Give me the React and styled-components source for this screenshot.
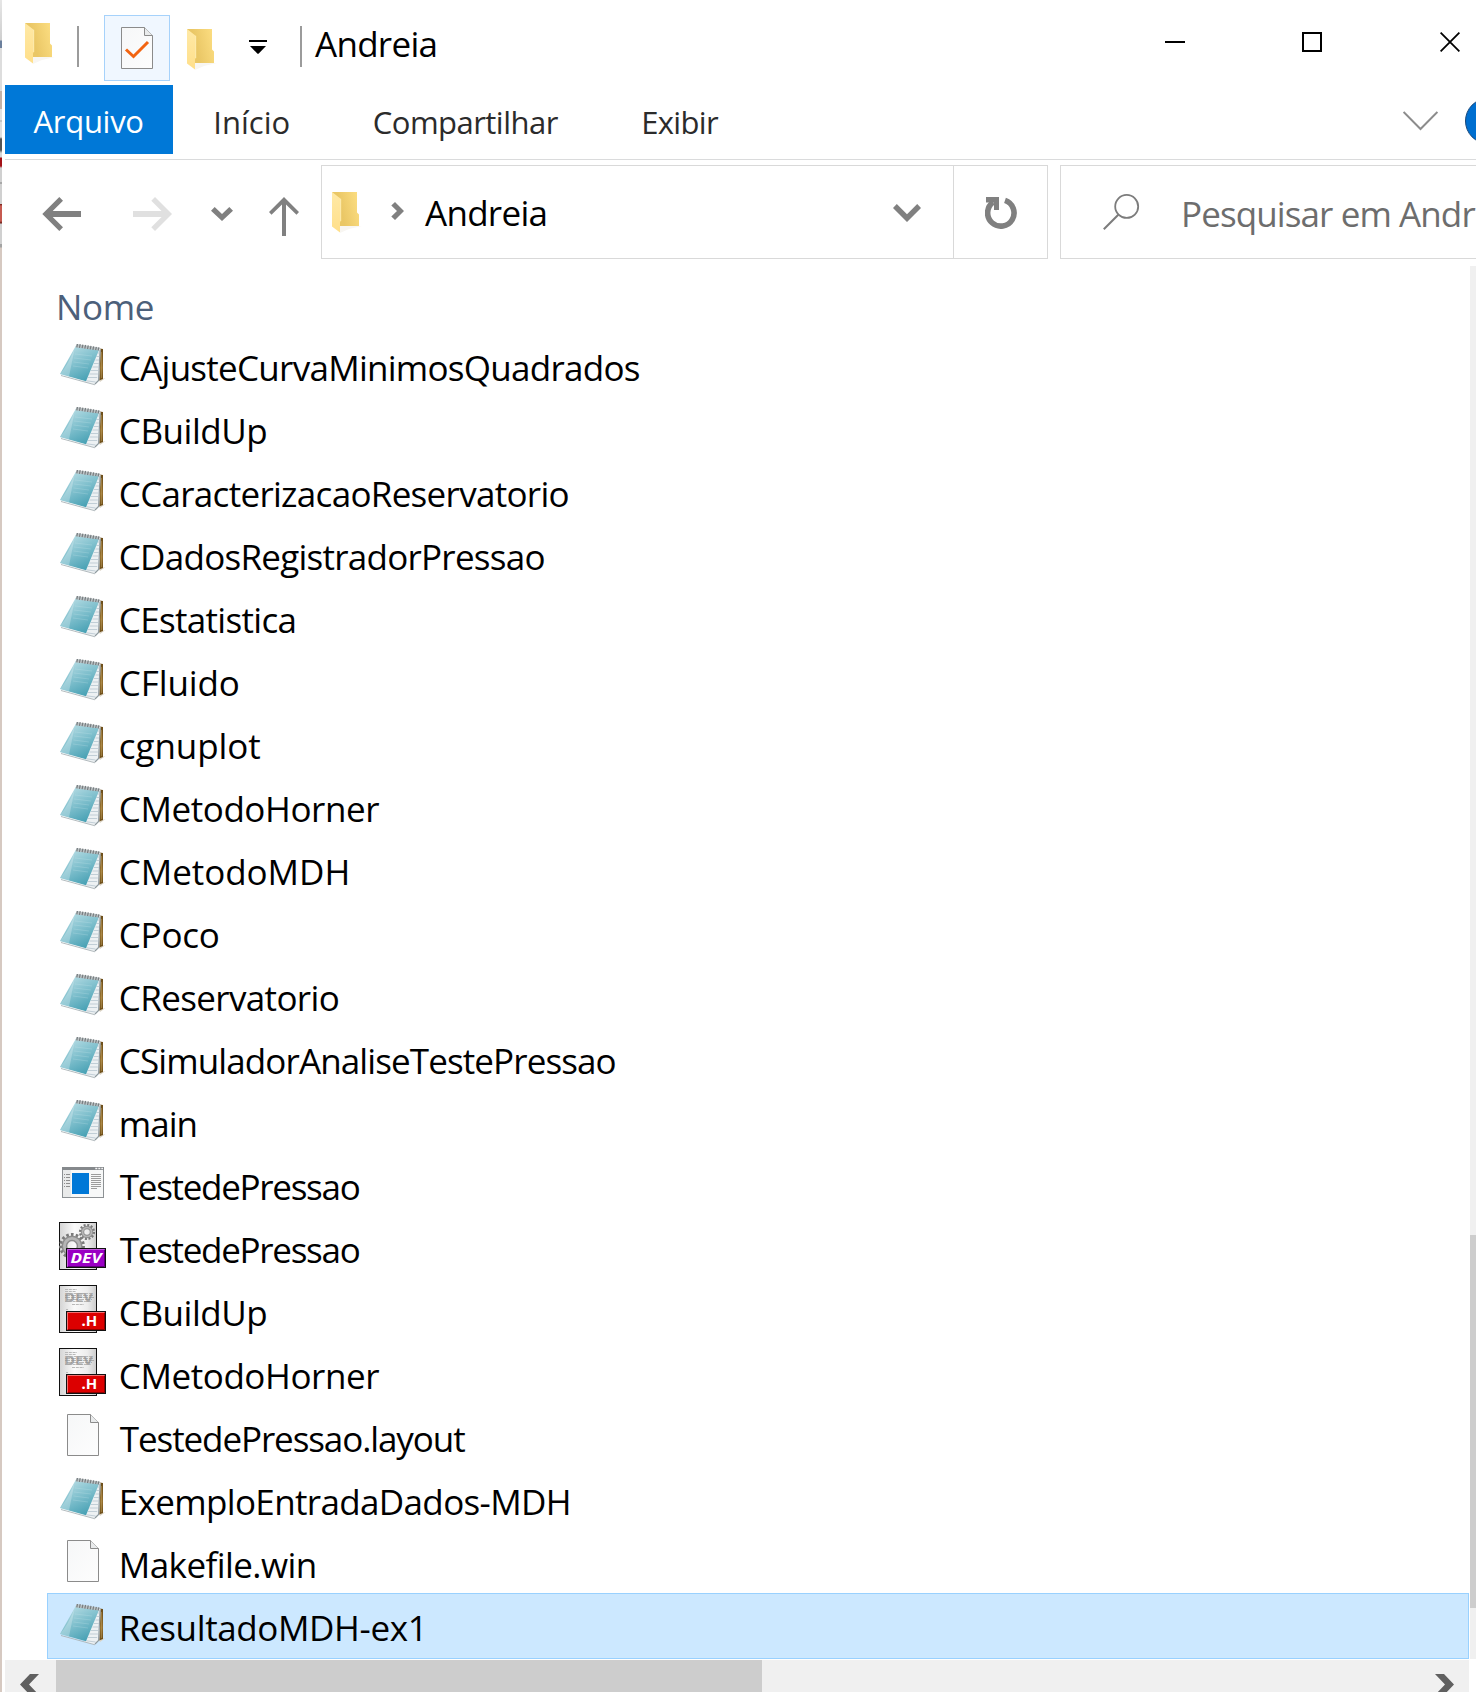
import React from "react";
import styled, { createGlobalStyle } from "styled-components";

const GlobalStyle = createGlobalStyle`
  *, *::before, *::after { box-sizing: border-box; }
  body {
    margin: 0;
    background: #fff;
    color: #000;
    font-family: "Open Sans", "Noto Sans", "Liberation Sans", sans-serif;
  }
  svg { display: block; flex: none; }
`;

const Screen = styled.div`
  display: flex;
  width: 1476px;
  height: 1692px;
  overflow: hidden;
`;

/* Sliver of the window that lies behind this one */
const BackdropEdge = styled.div`
  flex: none;
  width: 2px;
  background: linear-gradient(
    #e6e6e6 0, #cfcfcf 40px,
    #6b7f9c 41px, #6b7f9c 48px,
    #dddddd 48px, #dddddd 91px,
    #c3b2a8 91px, #c3b2a8 109px,
    #e2e2e2 109px, #e2e2e2 120px,
    #c4c4c4 120px, #c4c4c4 122px,
    #dedede 122px, #dedede 137px,
    #555555 139px, #555555 150px,
    #d6d6d6 153px, #d6d6d6 157px,
    #a31218 158px, #a31218 166px,
    #d0d0d0 168px, #d0d0d0 182px,
    #a8a8a8 182px, #a8a8a8 184px,
    #d0d0d0 184px, #d0d0d0 204px,
    #6a1a14 204px, #c65a50 206px, #c65a50 221px, #6a1a14 223px,
    #d0d0d0 224px, #d0d0d0 244px,
    #a3a3a3 244px, #a3a3a3 247px,
    #d6c9c1 248px, #d6c9c1 100%
  );
`;

const Window = styled.main`
  flex: none;
  display: flex;
  flex-direction: column;
  width: 1474px;
  padding-left: 3px;
  background: #fff;
`;

const TitleBar = styled.header`
  flex: none;
  display: flex;
  align-items: flex-start;
  height: 85px;
`;

const IconHolder = styled.span`
  flex: none;
  display: block;
  margin: ${(p) => p.$margin};
`;

const Separator = styled.span`
  flex: none;
  width: 2px;
  height: 41px;
  margin: 26px 0 0 ${(p) => p.$left}px;
  background: #9b9b9b;
`;

const QuickButton = styled.button`
  flex: none;
  display: flex;
  align-items: flex-start;
  justify-content: center;
  width: 66px;
  height: 66px;
  margin: 15px 0 0 25px;
  padding: 11px 0 0;
  border: 1px solid #a6d2fb;
  background: #f0f7ff;
`;

const Label = styled.span`
  font-size: ${(p) => p.$size || 35}px;
  letter-spacing: ${(p) => p.$tracking || 0}px;
  white-space: nowrap;
`;

const WindowTitle = styled(Label)`
  margin-left: 13px;
  line-height: 87px;
`;

const CaptionButtons = styled.div`
  display: flex;
  gap: 117px;
  margin: 32px 16px 0 auto;

  & > :last-child { margin-left: 1px; }
`;

const Ribbon = styled.nav`
  flex: none;
  display: flex;
  height: 75px;
  border-bottom: 1px solid #dadbdc;
`;

const Tab = styled.a`
  flex: none;
  height: 69px;
  padding-left: ${(p) => p.$inset}px;
  width: ${(p) => p.$width}px;
  line-height: ${(p) => (p.$active ? 72 : 74)}px;
  color: ${(p) => (p.$active ? "#fff" : "#2b2b2b")};
  background: ${(p) => (p.$active ? "#0078d7" : "transparent")};
`;

const RibbonTools = styled.div`
  display: flex;
  flex: none;
  width: 73px;
  margin-left: auto;
  overflow: hidden;
`;

const HelpBadge = styled.span`
  flex: none;
  width: 46px;
  height: 46px;
  margin: 13px 0 0 27px;
  border: 1px solid #17477a;
  border-radius: 50%;
  background: #006fd0;
`;

const AddressRow = styled.div`
  flex: none;
  display: flex;
  height: 106px;
  padding-top: 5px;
`;

const NavButtons = styled.div`
  flex: none;
  display: flex;
  width: 316px;
  padding: 32px 0 0 37px;
`;

const AddressBox = styled.div`
  flex: none;
  display: flex;
  width: 633px;
  height: 94px;
  border: 1px solid #d9d9d9;
`;

const Crumb = styled(Label)`
  flex: 1;
  margin-left: 21px;
  line-height: 94px;
`;

const RefreshButton = styled.button`
  flex: none;
  display: flex;
  align-items: flex-start;
  width: 95px;
  height: 94px;
  margin-left: -1px;
  padding: 31px 0 0 31px;
  border: 1px solid #d9d9d9;
  background: #fff;
`;

const SearchBox = styled.div`
  flex: none;
  display: flex;
  width: 440px;
  height: 94px;
  margin-left: 12px;
  border: 1px solid #d9d9d9;
  color: #6d6d6d;
`;

const SearchHint = styled(Label)`
  margin-left: 41px;
  line-height: 96px;
`;

const Content = styled.div`
  flex: none;
  display: flex;
  justify-content: space-between;
  width: 1471px;
  height: 1393px;
`;

const ListPane = styled.section`
  width: 1464px;
  padding-left: 42px;
`;

const ColumnHeader = styled.div`
  height: 67px;
  padding-left: 9px;
  line-height: 81px;
  color: #4c607a;
`;

const FileList = styled.ul`
  margin: 0;
  padding: 0;
  list-style: none;
`;

const FileRow = styled.li`
  display: flex;
  height: 66px;
  margin-bottom: -3px;
  padding: 6px 0 0 11px;
  border: 1px solid ${(p) => (p.$selected ? "#99d1ff" : "transparent")};
  background: ${(p) => (p.$selected ? "#cce8ff" : "transparent")};
`;

const FileName = styled(Label)`
  margin: -4px 0 0 ${(p) => 11.8 + (p.$indent || 0)}px;
  line-height: 64px;
`;

const VerticalTrack = styled.div`
  width: 6px;
  background: #f0f0f0;
`;

const VerticalThumb = styled.div`
  height: 373px;
  margin-top: 969px;
  background: #cdcdcd;
`;

const HorizontalTrack = styled.div`
  flex: none;
  display: flex;
  width: 1464px;
  height: 32px;
  margin-top: 1px;
  padding: 14px 15px 0 15px;
  background: linear-gradient(90deg, #f0f0f0 51px, #cdcdcd 51px, #cdcdcd 757px, #f0f0f0 757px);
  justify-content: space-between;
`;

const FolderIcon = () => (
  <svg width="30" height="42" viewBox="0 0 30 42">
    <defs>
      <linearGradient id="folderBack" x1="0" x2="1" y1="0.3" y2="0">
        <stop offset="0.25" stopColor="#eac766" />
        <stop offset="1" stopColor="#fddf83" />
      </linearGradient>
      <linearGradient id="folderFlap" x1="0" x2="0" y1="0" y2="1">
        <stop offset="0" stopColor="#ffe9a6" />
        <stop offset="1" stopColor="#ffdf8a" />
      </linearGradient>
    </defs>
    <path d="M8 34 L30 34 L17 37 L8 41 Z" fill="#f8f6f2" />
    <path d="M0 0 H25 V20.5 L27 22.5 V34 H8 Z" fill="url(#folderBack)" />
    <path d="M0 0 L8.7 6.8 V29 L8 30.5 V40.5 L0 34.5 Z" fill="url(#folderFlap)" />
    <path d="M8.7 6.8 V29" stroke="#fff0bd" strokeWidth="0.8" />
  </svg>
);

const Page = ({ children }) => (
  <>
    <path d="M0.5 0.5 H23.5 L31.5 8.5 V41.5 H0.5 Z" fill="url(#pageFill)" stroke="#8b8b8b" />
    <path d="M23.5 0.5 V8.5 H31.5" fill="#e9ebec" stroke="#8b8b8b" />
    {children}
  </>
);

const PageGradient = () => (
  <defs>
    <linearGradient id="pageFill" x1="0" x2="1" y1="0" y2="1">
      <stop offset="0" stopColor="#f6f7f8" />
      <stop offset="1" stopColor="#fdfdfd" />
    </linearGradient>
  </defs>
);

const CheckedPageIcon = () => (
  <svg width="32" height="42" viewBox="0 0 32 42">
    <PageGradient />
    <Page>
      <path d="M5 22.5 L12.5 29.5 L27 15" fill="none" stroke="#f26411" strokeWidth="3" />
    </Page>
  </svg>
);

const BlankPageIcon = () => (
  <svg width="48" height="48" viewBox="0 0 48 48">
    <PageGradient />
    <g transform="translate(8 3)">
      <Page />
    </g>
  </svg>
);

const NotepadIcon = () => (
  <svg width="48" height="48" viewBox="0 0 48 48">
    <defs>
      <linearGradient id="padCover" x1="0.2" x2="0.75" y1="0" y2="1">
        <stop offset="0" stopColor="#bcdfe6" />
        <stop offset="0.45" stopColor="#84c2cf" />
        <stop offset="1" stopColor="#419db1" />
      </linearGradient>
      <linearGradient id="padBack" x1="0" x2="0" y1="0" y2="1">
        <stop offset="0" stopColor="#6b4c18" />
        <stop offset="0.6" stopColor="#95702f" />
        <stop offset="1" stopColor="#6b4c18" />
      </linearGradient>
    </defs>
    <path d="M40 40 L46.5 38 L41 42 Z" fill="#d9d2c4" />
    <path d="M40.5 8.5 L44 9 L44 39 L40 40.5 Z" fill="url(#padBack)" />
    <path d="M42.4 12 V38" stroke="#c8a868" strokeWidth="0.5" />
    <path d="M38 9 L41.6 8.8 L40.3 40.5 L35.5 44.5 L25 42 Z" fill="#edf1f3" />
    <path d="M41.1 10 L39.6 40.5 L36 44" fill="none" stroke="#8f9a9f" strokeWidth="1.2" />
    <path
      d="M38.5 13 H40.5 M37.3 16.5 H40.2 M36.5 20 H40 M35 23.5 H39.8 M33.5 27 H39.6 M32 30.5 H39.2 M30.5 34 H38.8 M29 37.5 H38.2 M27.5 40.8 L36.5 42"
      stroke="#bccad2"
      strokeWidth="0.9"
    />
    <path d="M2 35.5 L36 44.8" stroke="#aab3b7" strokeWidth="0.9" />
    <path d="M17 5.5 L40.2 9.5 L27 41.3 L1 34 Z" fill="url(#padCover)" />
    <path d="M17 5.5 L15.5 9 Q9 25 1 34 L10 36.5 Q13 22 15.5 9 Z" fill="#e8f5f7" opacity="0.3" />
    <path
      d="M16 14 L33 16 M15 18 L32 20 M14.5 22 L30 24 M14 26 L29 28"
      stroke="#d6eef2"
      strokeWidth="0.7"
      opacity="0.3"
    />
    <path d="M17.5 4 L41 7.8 L40 10.5 L16.5 7.2 Z" fill="#bcc3c5" />
    <path
      d="M18.5 4 L17.8 7.4 M21.2 4.2 L20.4 7.8 M23.9 4.6 L23.1 8.2 M26.6 5 L25.8 8.6 M29.3 5.4 L28.5 9 M32 5.8 L31.2 9.4 M34.7 6.3 L33.9 9.8 M37.4 6.8 L36.6 10.2 M39.8 7.4 L39.2 10.4"
      stroke="#777d80"
      strokeWidth="1.2"
    />
  </svg>
);

const ProgramIcon = () => (
  <svg width="48" height="48" viewBox="0 0 48 48">
    <rect x="3.5" y="8.5" width="41" height="30" fill="#f7f8f8" stroke="#8d9194" />
    <rect x="3" y="8" width="42" height="3" fill="#85898c" />
    <path d="M36.3 9.5 H38.3 M39.3 9.5 H41.3 M42.3 9.5 H44" stroke="#f4f4f4" strokeWidth="1.4" />
    <rect x="4" y="11" width="8" height="27" fill="#e9eaea" />
    <path
      d="M5 15.5 H6 M7 15.5 H11 M5 18.5 H6 M7 18.5 H11 M5 21.5 H6 M7 21.5 H11 M5 24.5 H6 M7 24.5 H11 M5 27.5 H6 M7 27.5 H11"
      stroke="#8e8e8e"
    />
    <path
      d="M32 15.5 H42 M32 17.5 H42 M32 19.5 H42 M32 21.5 H42 M32 23.5 H42 M32 25.5 H42 M32 27.5 H42 M32 29.5 H38"
      stroke="#9c9c9c"
    />
    <rect x="13" y="14" width="17" height="21" fill="#0078d7" />
  </svg>
);

const Gear = ({ cx, cy, r, teeth, dash }) => (
  <g>
    <circle cx={cx} cy={cy} r={r} fill="none" stroke="#7a7a7a" strokeWidth={teeth} strokeDasharray={dash} />
    <circle cx={cx} cy={cy} r={r * 0.66} fill="none" stroke="#8c8c8c" strokeWidth={r * 0.5} />
    <circle cx={cx} cy={cy} r={r * 0.66} fill="none" stroke="#b5b5b5" strokeWidth={r * 0.25} />
  </g>
);

const TagText = styled.text`
  font-family: "Noto Sans", "Open Sans", sans-serif;
  font-weight: 700;
  font-style: ${(p) => (p.$slanted ? "italic" : "normal")};
  font-size: ${(p) => p.$size}px;
  fill: ${(p) => p.$fill || "#fff"};
`;

const TaggedPage = ({ children, color, light, dark, tag }) => (
  <svg width="48" height="48" viewBox="0 0 48 48">
    <defs>
      <linearGradient id="taggedFill" x1="0" x2="1" y1="0" y2="0">
        <stop offset="0" stopColor="#d4d4d4" />
        <stop offset="0.4" stopColor="#fafafa" />
        <stop offset="0.75" stopColor="#ededed" />
        <stop offset="1" stopColor="#cccccc" />
      </linearGradient>
    </defs>
    <rect x="0.5" y="0.5" width="37" height="47" fill="url(#taggedFill)" stroke="#111" />
    {children}
    <rect x="7.5" y="26.5" width="39" height="19" fill={color} stroke="#111" />
    <path d="M8.5 44.5 V27.5 H45.5" fill="none" stroke={light} />
    <path d="M9 44.5 H45.5 V28" fill="none" stroke={dark} />
    {tag}
  </svg>
);

const DevProjectIcon = () => (
  <TaggedPage
    color="#9a00c4"
    light="#c35be0"
    dark="#5c0078"
    tag={<TagText $slanted $size={15} x="11.5" y="41.3" textLength="31" lengthAdjust="spacingAndGlyphs">DEV</TagText>}
  >
    <Gear cx={28} cy={10} r={6.8} teeth={2.6} dash="2 1.56" />
    <Gear cx={13} cy={24} r={11.5} teeth={3} dash="2.6 2.2" />
  </TaggedPage>
);

const HeaderFileIcon = () => (
  <TaggedPage
    color="#dc0000"
    light="#f27070"
    dark="#8c0000"
    tag={<TagText $size={15} x="22.5" y="41.3">.H</TagText>}
  >
    <path d="M6 4.5 H18 M6 6.5 H17 M7 8.5 H33 M6 16.5 H32 M13 19.5 H25 M7 24.5 H9" stroke="#b9b9b9" strokeDasharray="3 0.8" />
    <TagText $size={12} $fill="#a8a8a8" x="5" y="17" textLength="29" lengthAdjust="spacingAndGlyphs">DEV</TagText>
    <path d="M6 10.5 H34 M6 12.5 H35 M8 14.5 H33" stroke="#8f8f8f" strokeWidth="0.6" strokeDasharray="5 1" />
  </TaggedPage>
);

const icons = {
  notepad: NotepadIcon,
  program: ProgramIcon,
  dev: DevProjectIcon,
  header: HeaderFileIcon,
  blank: BlankPageIcon,
};

const files = [
  { name: "CAjusteCurvaMinimosQuadrados", icon: "notepad", tracking: -0.725 },
  { name: "CBuildUp", icon: "notepad", tracking: -0.456 },
  { name: "CCaracterizacaoReservatorio", icon: "notepad", tracking: -0.7 },
  { name: "CDadosRegistradorPressao", icon: "notepad", tracking: -0.74 },
  { name: "CEstatistica", icon: "notepad", tracking: -0.67 },
  { name: "CFluido", icon: "notepad", tracking: -0.12 },
  { name: "cgnuplot", icon: "notepad", tracking: -0.08 },
  { name: "CMetodoHorner", icon: "notepad", tracking: -0.425 },
  { name: "CMetodoMDH", icon: "notepad", tracking: -0.05 },
  { name: "CPoco", icon: "notepad", tracking: -0.25 },
  { name: "CReservatorio", icon: "notepad", tracking: -0.64 },
  { name: "CSimuladorAnaliseTestePressao", icon: "notepad", tracking: -0.885 },
  { name: "main", icon: "notepad", tracking: -1 },
  { name: "TestedePressao", icon: "program", tracking: -1.29, indent: 1 },
  { name: "TestedePressao", icon: "dev", tracking: -1.29, indent: 1 },
  { name: "CBuildUp", icon: "header", tracking: -0.456 },
  { name: "CMetodoHorner", icon: "header", tracking: -0.425 },
  { name: "TestedePressao.layout", icon: "blank", tracking: -1.094, indent: 1 },
  { name: "ExemploEntradaDados-MDH", icon: "notepad", tracking: -0.65 },
  { name: "Makefile.win", icon: "blank", tracking: -0.57 },
  { name: "ResultadoMDH-ex1", icon: "notepad", tracking: -0.38, selected: true },
];

export default function App() {
  return (
    <Screen>
      <GlobalStyle />
      <BackdropEdge />
      <Window>
        <TitleBar>
          <IconHolder $margin="23px 0 0 20px"><FolderIcon /></IconHolder>
          <Separator $left={22} />
          <QuickButton><CheckedPageIcon /></QuickButton>
          <IconHolder $margin="29px 0 0 17px"><FolderIcon /></IconHolder>
          <IconHolder $margin="40px 0 0 32px">
            <svg width="18" height="14" viewBox="0 0 18 14">
              <path d="M0 0 H18 V2 H0 Z M1 6 H17 L9.5 13.7 H8.5 Z" />
            </svg>
          </IconHolder>
          <Separator $left={33} />
          <WindowTitle $tracking={-0.717}>Andreia</WindowTitle>
          <CaptionButtons>
            <svg width="20" height="20" viewBox="0 0 20 20"><path d="M0 10 H20" stroke="#000" strokeWidth="2" /></svg>
            <svg width="20" height="20" viewBox="0 0 20 20"><rect x="1" y="1" width="18" height="18" fill="none" stroke="#000" strokeWidth="2" /></svg>
            <svg width="20" height="20" viewBox="0 0 20 20"><path d="M0.6 0.6 L19.4 19.4 M19.4 0.6 L0.6 19.4" stroke="#000" strokeWidth="1.8" /></svg>
          </CaptionButtons>
        </TitleBar>

        <Ribbon>
          <Tab $active $inset={28.5} $width={168}><Label $size={31} $tracking={-0.283}>Arquivo</Label></Tab>
          <Tab $inset={40.2} $width={160}><Label $size={31} $tracking={0.05}>Início</Label></Tab>
          <Tab $inset={39.8} $width={267.5}><Label $size={31} $tracking={-0.53}>Compartilhar</Label></Tab>
          <Tab $inset={40.7} $width={170}><Label $size={31} $tracking={-0.66}>Exibir</Label></Tab>
          <RibbonTools>
            <IconHolder $margin="26px 0 0 0">
              <svg width="35" height="20" viewBox="0 0 35 20">
                <path d="M0.6 1 L17.5 18 L34.4 1" fill="none" stroke="#8c8c8c" strokeWidth="2" />
              </svg>
            </IconHolder>
            <HelpBadge />
          </RibbonTools>
        </Ribbon>

        <AddressRow>
          <NavButtons>
            <svg width="264" height="40" viewBox="42 197 264 40">
              <path fill="#808080" d="M59.3 197 L63 200.7 L52.7 211 H81 V217 H52.7 L63 227.3 L59.3 231 L42.3 214 Z" />
              <path fill="#e0e0e0" d="M155 197 L151.3 200.7 L161.6 211 H133 V217 H161.6 L151.3 227.3 L155 231 L172 214 Z" />
              <path fill="#808080" d="M214.7 207 L211 210.8 L222 221 L233 210.8 L229.3 207 L222 214 Z" />
              <path fill="#808080" d="M284 197 L269 212 L271.5 214.8 L282 204.6 V236 H286 V204.6 L296.5 214.8 L299 212 Z" />
            </svg>
          </NavButtons>
          <AddressBox>
            <IconHolder $margin="26px 0 0 10px"><FolderIcon /></IconHolder>
            <IconHolder $margin="35px 0 0 29px">
              <svg width="13" height="20" viewBox="0 0 13 20">
                <path fill="#808080" d="M4 1 L0.3 4.5 L6 10 L0.3 15.5 L4 19 L13 10 Z" />
              </svg>
            </IconHolder>
            <Crumb $tracking={-0.717}>Andreia</Crumb>
            <IconHolder $margin="38px 32px 0 0">
              <svg width="28" height="18" viewBox="0 0 28 18">
                <path fill="#808080" d="M3.8 0 L0 4 L14 18 L28 4 L24.2 0 L14 10.2 Z" />
              </svg>
            </IconHolder>
          </AddressBox>
          <RefreshButton>
            <svg width="33" height="33" viewBox="985 197 33 33">
              <path fill="none" stroke="#808080" strokeWidth="5.6" d="M1005 200.4 A13.2 13.2 0 1 1 993 202.3" />
              <path fill="#808080" d="M986 197 H999 V210 H994 V202.5 H986 Z" />
              <path fill="#808080" d="M991 199 H999 V210 Z" />
            </svg>
          </RefreshButton>
          <SearchBox>
            <IconHolder $margin="28px 0 0 42px">
              <svg width="37" height="38" viewBox="1103 194 37 38">
                <circle cx="1126.7" cy="206.4" r="11.5" fill="none" stroke="#7c7c7c" strokeWidth="1.8" />
                <path d="M1118.3 214.7 L1103.8 229.3" stroke="#7c7c7c" strokeWidth="2" />
              </svg>
            </IconHolder>
            <SearchHint $tracking={-0.9}>Pesquisar em Andreia</SearchHint>
          </SearchBox>
        </AddressRow>

        <Content>
          <ListPane>
            <ColumnHeader><Label $tracking={-0.355}>Nome</Label></ColumnHeader>
            <FileList>
              {files.map((file) => {
                const Icon = icons[file.icon];
                return (
                  <FileRow key={file.icon + file.name} $selected={file.selected}>
                    <Icon />
                    <FileName $tracking={file.tracking} $indent={file.indent}>{file.name}</FileName>
                  </FileRow>
                );
              })}
            </FileList>
          </ListPane>
          <VerticalTrack><VerticalThumb /></VerticalTrack>
        </Content>

        <HorizontalTrack>
          <svg width="19" height="21" viewBox="0 0 19 21">
            <path fill="#606060" d="M10 0 H19 L9 10.5 L19 21 H10 L0 10.5 Z" />
          </svg>
          <svg width="19" height="21" viewBox="0 0 19 21">
            <path fill="#606060" d="M9 0 H0 L10 10.5 L0 21 H9 L19 10.5 Z" />
          </svg>
        </HorizontalTrack>
      </Window>
    </Screen>
  );
}
